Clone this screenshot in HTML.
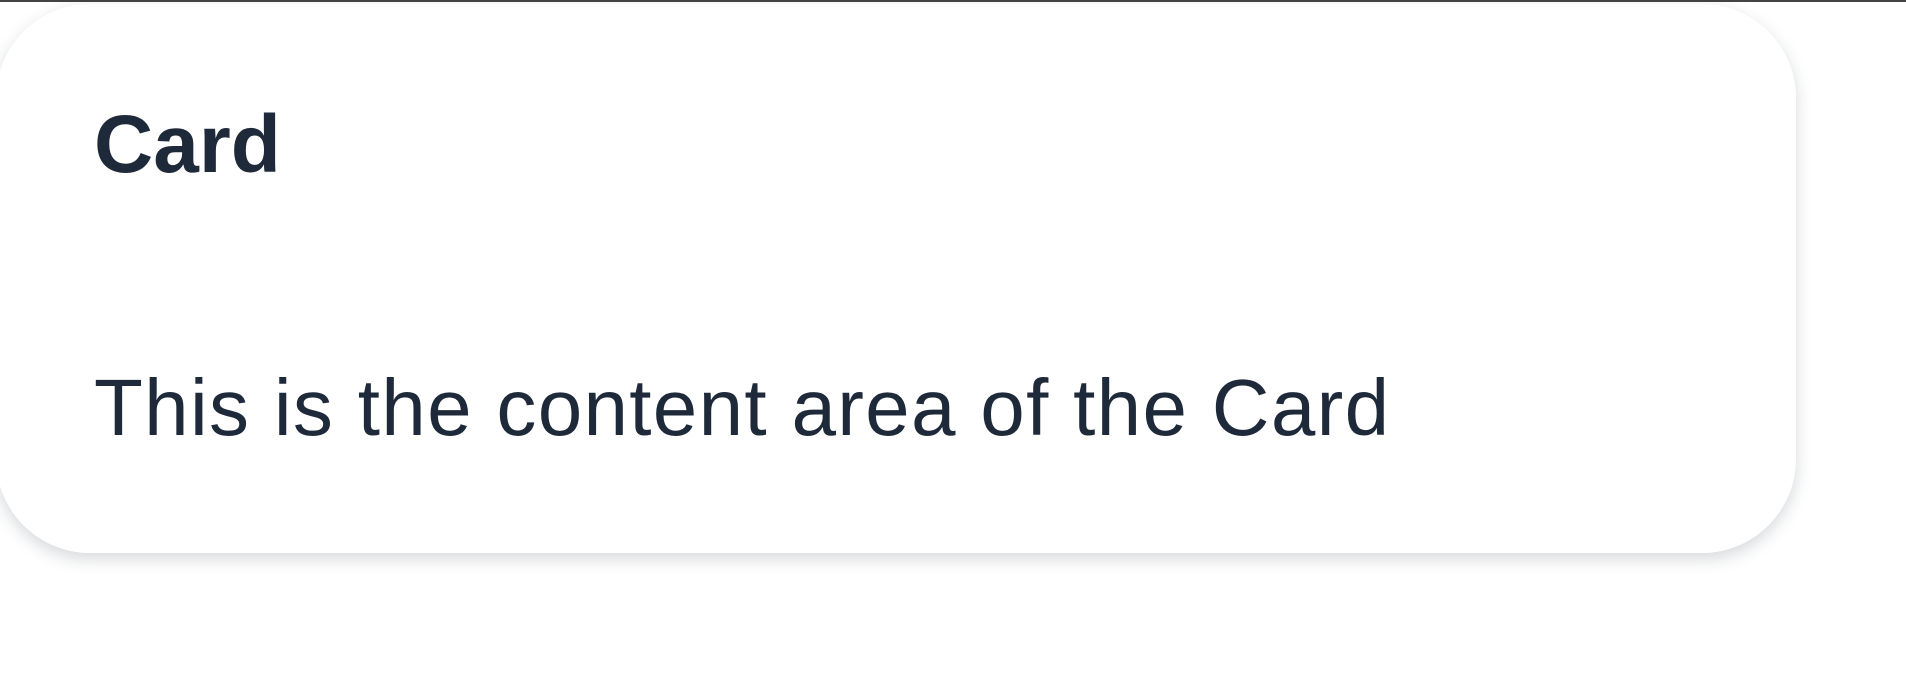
<!DOCTYPE html>
<html><head><style>
html,body{margin:0;padding:0;width:1906px;height:686px;overflow:hidden;background:#fff;font-family:"Liberation Sans",sans-serif;}
.bar{position:absolute;left:0;top:0;width:1906px;height:2px;background:#444;}
.card{position:absolute;left:-4px;top:4px;width:1800px;height:549px;background:#fff;border-radius:94px;box-shadow:0 6px 16px rgba(30,42,58,0.18);}
.h{position:absolute;left:94px;top:0;font-size:82px;font-weight:bold;color:#1e2a3a;line-height:1;white-space:nowrap;}
.b{position:absolute;left:94px;font-size:80px;color:#1e2a3a;line-height:1;white-space:nowrap;letter-spacing:1.3px;}
</style></head><body>
<div class="bar"></div>
<div class="card"></div>
<div class="h" style="top:104px">Card</div>
<div class="b" style="top:368px">This is the content area of the Card</div>
</body></html>
